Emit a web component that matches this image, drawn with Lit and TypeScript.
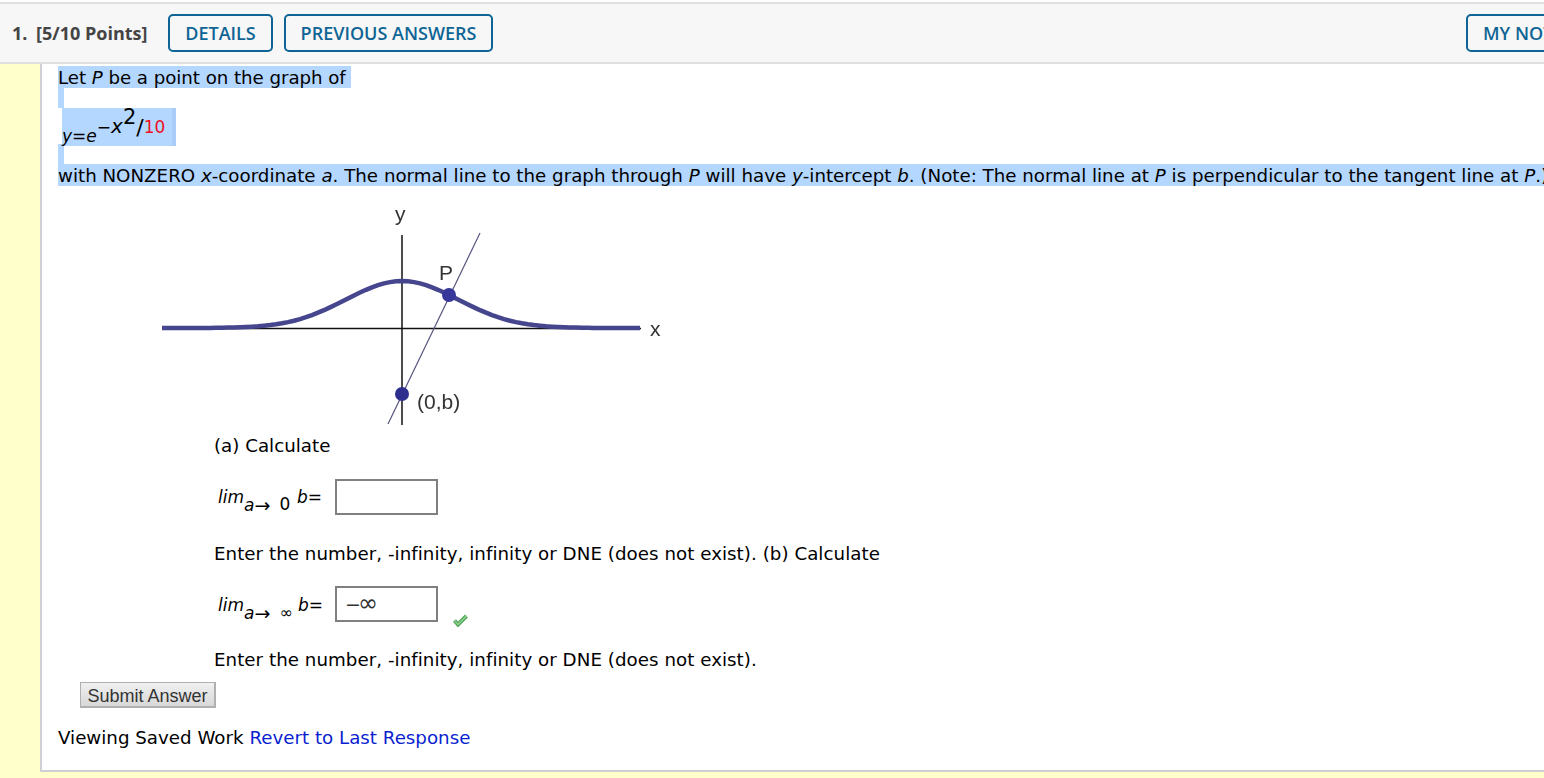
import { LitElement, html, css, svg } from "lit";
import { customElement } from "lit/decorators.js";

const curve = (() => {
  const pts: string[] = [];
  const xs: number[] = [];
  for (let x = 162; x < 640; x += 6) xs.push(x);
  xs.push(640);
  for (const x of xs) {
    const y = 328 - 47 * Math.exp(-((x - 402) ** 2) / (2 * 56 * 56));
    pts.push(`${x - 150},${(y - 200).toFixed(1)}`);
  }
  return pts.join(" ");
})();

@customElement("app-root")
export class AppRoot extends LitElement {
  static styles = css`
    :host { display: block; height: 778px; width: 1544px; overflow: hidden; background: #ffffcc; position: relative; }
    .top { height: 2px; background: #fff; }
    .hdr { box-sizing: border-box; height: 62px; background: #f7f7f7; border-top: 2px solid #e0e0e0; border-bottom: 2px solid #e0e0e0;
      display: flex; align-items: center; overflow: hidden; font-family: "Open Sans", sans-serif; padding-left: 12px; }
    .num { font-weight: 700; font-size: 18px; color: #444; width: 24px; flex: none; }
    .pts { font-weight: 700; font-size: 18px; color: #444; width: 132px; flex: none; }
    .btn { box-sizing: border-box; flex: none; height: 38px; border: 2px solid #0e6595; border-radius: 5px; color: #0e6595; background: #fff0;
      font: 600 18px "Open Sans", sans-serif; display: flex; align-items: center; justify-content: center; padding: 0 15px; margin-right: 11px; white-space: nowrap; }
    .details { width: 105px; }
    .prev { width: 209px; }
    .notes { margin-left: 962px; margin-right: 0; }
    .card { box-sizing: border-box; margin-left: 40px; height: 708px; background: #fff; border-left: 2px solid #cfcfd4; border-bottom: 2px solid #cfcfd4;
      padding: 2px 0 0 16px; font: 18.24px/22px "DejaVu Sans", Verdana, sans-serif; color: #000; overflow: hidden; }
    .sel { display: inline-block; background: #b4d7ff; padding-top: 1px; line-height: 21px; height: 21px; }
    .first { letter-spacing: -.06px; }
    .line { white-space: nowrap; height: 22px; }
    .lineb { margin-top: -2px; }
    .stub { width: 6px; height: 22px; margin-top: -2px; background: #b4d7ff; }
    .math { display: flex; height: 38px; }
    .formula { margin-left: 4px; width: 110px; flex: none; background: #b4d7ff; height: 38px; font-size: 17px; line-height: 38px; white-space: nowrap; }
    .mbar { width: 4px; background: #a9cdf8; height: 38px; }
    .fb { position: relative; top: 8px; }
    .ex { font-size: 17px; position: relative; top: -1px; }
    .exx { font-size: 20px; position: relative; top: -1px; }
    .ex2 { font-size: 21px; position: relative; top: -10px; }
    .ex3 { font-size: 22px; position: relative; top: 1px; }
    .red { color: #ee1122; font-size: 17px; position: relative; top: -1px; }
    svg.fig { display: block; width: 520px; height: 230px; margin: 14px 0 0 92px; filter: blur(.35px); }
    .fig text { font: 21px "Liberation Sans", sans-serif; fill: #333; }
    .part { margin-left: 156px; }
    .calc { margin-top: 5px; }
    .row { display: flex; align-items: flex-start; height: 36px; margin-left: 160px; }
    .r1 { margin-top: 22px; }
    .r2 { margin-top: 21px; }
    .lim { font-size: 17px; font-style: italic; line-height: 36px; white-space: nowrap; width: 117px; flex: none; display: flex; }
    .lim2 { margin-top: 1px; }
    .sub { position: relative; top: 8px; width: 53px; flex: none; display: flex; }
    .sub2 { width: 54px; }
    .arrow { font-style: normal; font-size: 19px; width: 26px; flex: none; }
    .subn { font-style: normal; position: relative; top: -1px; font-size: 17px; margin-left: -1px; }
    .subi { font-size: 15.500px; top: 0; }
    .inp { box-sizing: border-box; width: 103px; height: 36px; border: 2px solid #808080; background: #fff; font: 19px/32px "DejaVu Sans", sans-serif; padding-left: 8px; color: #333; }
    .inf { font-size: 24px; margin-left: -3px; line-height: 24px; }
    .chk { width: 16px; height: 13px; margin: 28px 0 0 15px; flex: none; }
    .e1 { margin-top: 28px; letter-spacing: .04px; }
    .e2 { margin-top: 27px; letter-spacing: .04px; }
    .submit { box-sizing: border-box; display: block; margin: 11px 0 0 22px; width: 136px; height: 26px; border: 1px solid #b0b0b0; border-bottom-width: 2px; border-right-width: 2px;
      background: linear-gradient(#f0f0f0, #d8d8d8); font: 18px/22px "Liberation Sans", sans-serif; color: #333; padding: 2px 0 0; }
    .view { margin-top: 19px; }
    a { color: #0a1fd0; text-decoration: none; }
  `;

  render() {
    return html`
      <div class="top"></div>
      <div class="hdr">
        <span class="num">1.</span><span class="pts">[5/10 Points]</span>
        <span class="btn details">DETAILS</span><span class="btn prev">PREVIOUS ANSWERS</span>
        <span class="btn notes">MY NOTES</span>
      </div>
      <div class="card">
        <div class="line"><span class="sel first">Let <i>P</i> be a point on the graph of&nbsp;</span></div>
        <div class="stub"></div>
        <div class="math">
          <div class="formula"><i class="fb">y</i><span class="fb">=</span><i class="fb">e</i><span class="ex">−</span><i class="exx">x</i><span class="ex2">2</span><span class="ex3">/</span><span class="red">10</span></div>
          <div class="mbar"></div>
        </div>
        <div class="stub"></div>
        <div class="line lineb"><span class="sel">with NONZERO <i>x</i>-coordinate <i>a</i>. The normal line to the graph through <i>P</i> will have <i>y</i>-intercept <i>b</i>. (Note: The normal line at <i>P</i> is perpendicular to the tangent line at <i>P</i>.)</span></div>
        <svg class="fig" viewBox="0 0 520 230">
          ${svg`
            <line x1="12" y1="128.500" x2="491" y2="128.500" stroke="#111" stroke-width="1.500"/>
            <line x1="252" y1="35" x2="252" y2="225" stroke="#111" stroke-width="1.500"/>
            <line x1="238" y1="224" x2="330" y2="33" stroke="#55557f" stroke-width="1.200"/>
            <polyline points="${curve}" fill="none" stroke="#46468f" stroke-width="4.500"/>
            <circle cx="299" cy="95" r="7" fill="#38389a"/>
            <circle cx="252" cy="194" r="7" fill="#2e2e8e"/>
            <text x="245" y="21">y</text>
            <text x="289" y="80">P</text>
            <text x="500" y="136">x</text>
            <text x="267" y="209">(0,b)</text>
          `}
        </svg>
        <div class="part calc">(a) Calculate</div>
        <div class="row r1">
          <span class="lim">lim<span class="sub">a<span class="arrow">→</span><span class="subn">0</span></span><span>b=</span></span>
          <div class="inp"></div>
        </div>
        <div class="part e1">Enter the number, -infinity, infinity or DNE (does not exist). (b) Calculate</div>
        <div class="row r2">
          <span class="lim lim2">lim<span class="sub sub2">a<span class="arrow">→</span><span class="subn subi">∞</span></span><span>b=</span></span>
          <div class="inp">−<span class="inf">∞</span></div>
          <svg class="chk" viewBox="0 0 16 13">
            <polyline points="1.500,6.500 5,10.500 13.500,2" fill="none" stroke="#4e9e58" stroke-width="4"/>
            <polyline points="1.500,6.500 5,10.500 13.500,2" fill="none" stroke="#86cf86" stroke-width="1.800"/>
          </svg>
        </div>
        <div class="part e2">Enter the number, -infinity, infinity or DNE (does not exist).</div>
        <button class="submit">Submit Answer</button>
        <div class="view">Viewing Saved Work <a href="#">Revert to Last Response</a></div>
      </div>
    `;
  }
}
